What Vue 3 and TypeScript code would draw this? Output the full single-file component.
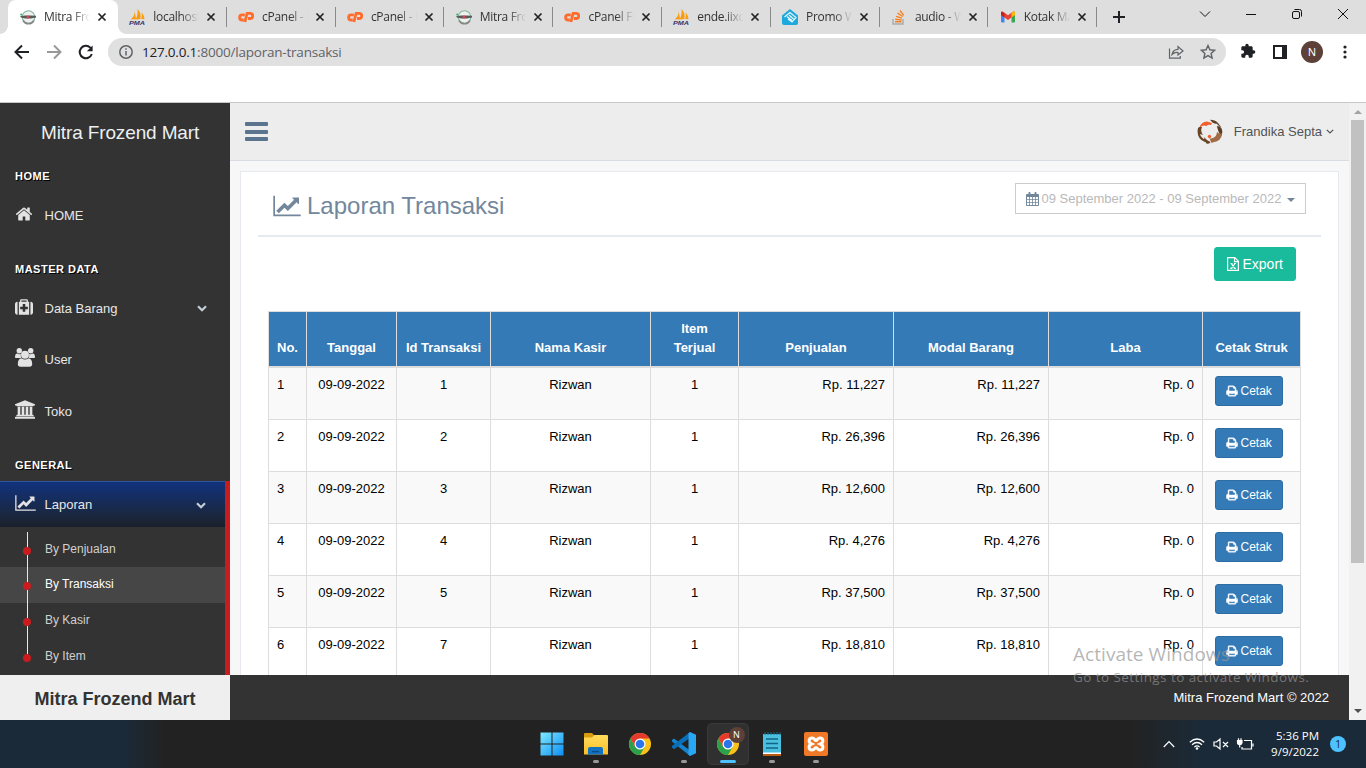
<script setup lang="ts">
interface Tab { title: string; icon: string }
interface Row { no: number; tanggal: string; id: number; kasir: string; item: number; penjualan: string; modal: string; laba: string }

const tabs: Tab[] = [
  { title: 'Mitra Frozend', icon: 'mitra' },
  { title: 'localhost / 127', icon: 'pma' },
  { title: 'cPanel - Main', icon: 'cpanel' },
  { title: 'cPanel - Main', icon: 'cpanel' },
  { title: 'Mitra Frozend', icon: 'mitra' },
  { title: 'cPanel File', icon: 'cpanel' },
  { title: 'ende.iixcp', icon: 'pma' },
  { title: 'Promo Web', icon: 'promo' },
  { title: 'audio - Web', icon: 'stack' },
  { title: 'Kotak Masuk', icon: 'gmail' },
]

const columns: string[] = ['No.', 'Tanggal', 'Id Transaksi', 'Nama Kasir', 'Item Terjual', 'Penjualan', 'Modal Barang', 'Laba', 'Cetak Struk']

const makeRow = (no: number, id: number, total: string): Row => ({
  no, tanggal: '09-09-2022', id, kasir: 'Rizwan', item: 1, penjualan: `Rp. ${total}`, modal: `Rp. ${total}`, laba: 'Rp. 0',
})
const rows: Row[] = [
  makeRow(1, 1, '11,227'),
  makeRow(2, 2, '26,396'),
  makeRow(3, 3, '12,600'),
  makeRow(4, 4, '4,276'),
  makeRow(5, 5, '37,500'),
  makeRow(6, 7, '18,810'),
]

const submenu: string[] = ['By Penjualan', 'By Transaksi', 'By Kasir', 'By Item']
const apps: { icon: string; state: string }[] = [
  { icon: 'windows', state: '' },
  { icon: 'folder', state: 'open' },
  { icon: 'chrome', state: '' },
  { icon: 'vscode', state: 'open' },
  { icon: 'chrome', state: 'active' },
  { icon: 'notepad', state: 'open' },
  { icon: 'xampp', state: 'open' },
]
</script>

<template>
  <div class="screen">
    <svg class="defs" aria-hidden="true">
      <symbol id="i-mitra" viewBox="0 0 16 16">
        <circle cx="8.5" cy="8" r="6.3" fill="#eef1ef" stroke="#7fb89c" stroke-width="1.1" />
        <path d="M3 11.5a6.3 6.3 0 0 0 11 0" fill="none" stroke="#888" stroke-width="1.6" />
        <path d="M0 7.2l5-.8h6l5 .4v1.8l-5 .8H5L1 8.6z" fill="#5a5a5c" />
        <circle cx="8" cy="8" r="1.5" fill="#d0494b" /><circle cx="1.3" cy="5.6" r="1.1" fill="#3bb273" />
      </symbol>
      <symbol id="i-pma" viewBox="0 0 16 16">
        <path d="M5.6 1.5C6 5 5 8 1.5 10.5L7 10zM8.5 0c3 3 3.5 6.5 3 10L6.5 10.4C8.5 7 9 4 8.500 0zM12.500 3.500c2 2 2.800 4.500 3 6.500l-3.200.2c.6-2 .7-4 .2-6.700z" fill="#f89c0e" />
        <text x="0" y="15.800" font-family="Liberation Sans" font-size="6.200" font-weight="bold" font-style="italic" textLength="16" lengthAdjust="spacingAndGlyphs" fill="#33336b">PMA</text>
      </symbol>
      <symbol id="i-cpanel" viewBox="0 0 16 16">
        <path d="M6.800 5.800H4.200a2.600 2.600 0 0 0 0 5.200h1.500M6.900 13l2.200-8.700h3a2.600 2.600 0 0 1 0 5.200H10" fill="none" stroke="#ff6c2c" stroke-width="2.800" />
      </symbol>
      <symbol id="i-promo" viewBox="0 0 16 16">
        <path d="M8 0l8 6.500V14q0 2-2 2H2q-2 0-2-2V6.500z" fill="#1da9dc" />
        <path d="M2.500 8L8 3.500l6 5-4 4.500-4-3M5 7.500l5 4M7 6l4.500 4" fill="none" stroke="#e8f8ff" stroke-width="1.200" />
      </symbol>
      <symbol id="i-stack" viewBox="0 0 16 16">
        <path d="M2 10v5h10v-5" fill="none" stroke="#a9aaac" stroke-width="1.400" />
        <path d="M4 12.800h6.500M4.200 10.300l6.300.7M5 7.300l6 1.800M6.500 4.200l5.300 3.300M9 1.500l3.800 4.900" stroke="#f48024" stroke-width="1.400" />
      </symbol>
      <symbol id="i-gmail" viewBox="0 0 16 16">
        <path d="M1 4v8.500q0 1 1 1h2.500V7z" fill="#4285f4" /><path d="M15 4v8.500q0 1-1 1h-2.500V7z" fill="#34a853" />
        <path d="M1 6V4q0-2 2.200-1.300L8 6.300l4.800-3.600Q15 2 15 4v2l-7 5z" fill="#ea4335" />
        <path d="M11.500 3.700l1.300-1Q15 2 15 4v2l-3.500 2.600z" fill="#fbbc04" /><path d="M1 6V4q0-1 .8-1.400L4.500 4.600v4z" fill="#c5221f" />
      </symbol>
      <symbol id="i-home" viewBox="0 0 1792 1792"><path d="M1472 992v480q0 26-19 45t-45 19h-384v-384h-256v384h-384q-26 0-45-19t-19-45v-480q0-1 .5-3t.5-3l575-474 575 474q1 2 1 6zm223-69l-62 74q-8 9-21 11h-3q-13 0-21-7l-692-577-692 577q-12 8-24 7-13-2-21-11l-62-74q-8-10-7-23.500t11-21.500l719-599q32-26 76-26t76 26l244 204v-195q0-14 9-23t23-9h192q14 0 23 9t9 23v408l219 182q10 8 11 21.500t-7 23.500z" /></symbol>
      <symbol id="i-medkit" viewBox="0 0 1792 1792"><path d="M1280 1088v-192q0-14-9-23t-23-9h-224v-224q0-14-9-23t-23-9h-192q-14 0-23 9t-9 23v224h-224q-14 0-23 9t-9 23v192q0 14 9 23t23 9h224v224q0 14 9 23t23 9h192q14 0 23-9t9-23v-224h224q14 0 23-9t9-23zm-640-704h512v-128h-512v128zm-384 0v1280h-32q-92 0-158-66t-66-158v-832q0-92 66-158t158-66h32zm1152 0v1280h-1024v-1280h128v-160q0-40 28-68t68-28h576q40 0 68 28t28 68v160h128zm384 224v832q0 92-66 158t-158 66h-32v-1280h32q92 0 158 66t66 158z" /></symbol>
      <symbol id="i-users" viewBox="0 0 20 19">
        <circle cx="4.300" cy="2.800" r="2.700" /><circle cx="15.700" cy="2.800" r="2.700" />
        <path d="M0 9.500q0-4 2.200-4 2 1.300 3.800.4-.7 2.200.3 4.100H2Q0 10 0 9.500zM20 9.500q0-4-2.200-4-2 1.300-3.800.4.700 2.200-.3 4.100H18q2 0 2-.5z" />
        <circle cx="10" cy="6.700" r="4" />
        <path d="M6.500 10.300Q10 12.800 13.500 10.300q3.700.7 3.700 5.700 0 2.800-2.700 2.800h-9q-2.700 0-2.700-2.800 0-5 3.700-5.700z" />
      </symbol>
      <symbol id="i-bank" viewBox="0 0 1920 1792"><path d="M960 0l960 384v128h-128q0 26-20.500 45t-48.500 19h-1526q-28 0-48.500-19t-20.500-45h-128v-128zm-704 640h256v768h128v-768h256v768h128v-768h256v768h128v-768h256v768h59q28 0 48.500 19t20.500 45v64h-1664v-64q0-26 20.500-45t48.500-19h59v-768zm1595 960q28 0 48.500 19t20.500 45v128h-1920v-128q0-26 20.500-45t48.500-19h1782z" /></symbol>
      <symbol id="i-chart" viewBox="0 0 2048 1792"><path d="M2048 1536v128h-2048v-1536h128v1408h1920zm-128-1248v435q0 21-19.500 29.500t-35.500-7.500l-121-121-633 633q-10 10-23 10t-23-10l-233-233-416 416-192-192 585-585q10-10 23-10t23 10l233 233 464-464-121-121q-16-16-7.500-35.500t29.500-19.500h435q14 0 23 9t9 23z" /></symbol>
      <symbol id="i-print" viewBox="0 0 1792 1792"><path d="M448 1536h896v-256h-896v256zm0-640h896v-384h-160q-40 0-68-28t-28-68v-160h-640v640zm1152 64q0-26-19-45t-45-19-45 19-19 45 19 45 45 19 45-19 19-45zm128 0v416q0 13-9.500 22.500t-22.500 9.500h-224v160q0 40-28 68t-68 28h-960q-40 0-68-28t-28-68v-160h-224q-13 0-22.500-9.500t-9.500-22.500v-416q0-79 56.500-135.500t135.500-56.500h64v-544q0-40 28-68t68-28h672q40 0 88 20t76 48l152 152q28 28 48 76t20 88v256h64q79 0 135.500 56.500t56.500 135.500z" /></symbol>
      <symbol id="i-calendar" viewBox="0 0 13 14">
        <path fill-rule="evenodd" d="M1 2h11q1 0 1 1v10q0 1-1 1H1q-1 0-1-1V3q0-1 1-1zM1 5v2.200h2.200V5zM4 5v2.200h2.200V5zM7 5v2.200h2.200V5zM10 5v2.200h2V5zM1 8v2.200h2.200V8zM4 8v2.200h2.200V8zM7 8v2.200h2.200V8zM10 8v2.200h2V8zM1 11v2h2.200v-2zM4 11v2h2.200v-2zM7 11v2h2.200v-2zM10 11v2h2v-2z" />
        <rect x="2.500" y="0" width="2" height="3.600" rx=".8" /><rect x="8.500" y="0" width="2" height="3.600" rx=".8" />
      </symbol>
      <symbol id="i-excel" viewBox="0 0 12 14">
        <path d="M.6.600h7.200l3.600 3.600v9.200H.6zM7.500.600v4h4M3.500 6.500h2M7 6.500h1.800M3.300 11.300h2M6.800 11.300h2M4.300 6.500l3.500 4.800M8 6.500l-3.600 4.800" fill="none" stroke="currentColor" stroke-width="1.200" />
      </symbol>
      <symbol id="i-chevron" viewBox="0 0 10 7"><path d="M1 1.200L5 5.200 9 1.200" fill="none" stroke="currentColor" stroke-width="2.200" /></symbol>
      <symbol id="i-windows" viewBox="0 0 24 24">
        <linearGradient id="g-win" x1="0" y1="0" x2="1" y2="1"><stop offset="0" stop-color="#7eeaff" /><stop offset="1" stop-color="#0d8ef5" /></linearGradient>
        <path d="M.500.500h11v11H.500zM12.500.500h11v11h-11zM.500 12.500h11v11H.500zM12.500 12.500h11v11h-11z" fill="url(#g-win)" />
      </symbol>
      <symbol id="i-folder" viewBox="0 0 24 24">
        <path d="M0 2q0-1 1-1h7l2.500 2.500H14V10H0z" fill="#d89c0c" />
        <linearGradient id="g-fold" x1="0" y1="0" x2="0" y2="1"><stop offset="0" stop-color="#ffdc5e" /><stop offset="1" stop-color="#f9bf26" /></linearGradient>
        <path d="M0 5.500h8L10.500 3H23q1 0 1 1V22.500H0z" fill="url(#g-fold)" />
        <path d="M4 22.500v-5.500q0-2 2-2h11q2 0 2 2v5.500z" fill="#1272c2" /><path d="M8 19h7v1.300H8z" fill="#0b4a84" />
      </symbol>
      <symbol id="i-chrome" viewBox="0 0 24 24">
        <circle cx="12" cy="12" r="11" fill="#fbc116" />
        <path d="M12 12l4.800 2.800L12 23A11 11 0 0 1 2.470 6.500L7.200 14.700z" fill="#2da04c" />
        <path d="M2.470 6.500A11 11 0 0 1 21.530 6.500H12L7.200 14.700z" fill="#e33b2e" />
        <circle cx="12" cy="12" r="5.500" fill="#fff" /><circle cx="12" cy="12" r="4.300" fill="#2a75ea" />
      </symbol>
      <symbol id="i-vscode" viewBox="0 0 24 24">
        <path d="M0 8l2-1.600L18 18.500V24L0 9.500z" fill="#1484cf" /><path d="M0 15.500l2 1.800L18 6V0L0 14z" fill="#0a6fb8" />
        <path d="M18 0l6 2.700v18.600L18 24l-1.500-1.200V1.200z" fill="#2ba6f2" />
      </symbol>
      <symbol id="i-notepad" viewBox="0 0 24 24">
        <path d="M3 21h18v3H3z" fill="#b85a14" /><path d="M3 20h18v2H3z" fill="#fff" />
        <path d="M3 2h18v18.500H3z" fill="#4bbfde" /><path d="M6 7h12M6 11.500h12M6 16h12" stroke="#0f6585" stroke-width="1.500" />
        <path d="M5 0v3M8 0v3M11 0v3M14 0v3M17 0v3M20 0v3" stroke="#166c8c" />
      </symbol>
      <symbol id="i-xampp" viewBox="0 0 24 24">
        <rect width="24" height="24" rx="2" fill="#f07826" />
        <path d="M7.500 12C4 10.500 4.500 6 8 6c3 0 2.500 2.500 4 2.500S13 6 16 6c3.500 0 4 4.500.5 6 3.500 1.500 3 6-.5 6-3 0-2.500-2.500-4-2.500S11 18 8 18c-3.500 0-4-4.500-.5-6z" fill="none" stroke="#fff" stroke-width="3" />
      </symbol>
    </svg>

    <header class="strip">
      <div v-for="(tab, i) in tabs" :key="i" class="tab" :class="{ current: i === 0 }">
        <svg class="favicon"><use :href="'#i-' + tab.icon" /></svg>
        <span class="tab-title">{{ tab.title }}</span>
        <svg class="tab-close" viewBox="0 0 8 8"><path d="M.5.5l7 7M7.500.5l-7 7" /></svg>
      </div>
      <svg class="plus" viewBox="0 0 12 12"><path d="M6 0v12M0 6h12" /></svg>
      <div class="win-controls">
        <svg viewBox="0 0 12 12"><path d="M1 3.500l5 5 5-5" /></svg>
        <svg viewBox="0 0 12 12"><path d="M1 6.500h10" /></svg>
        <svg viewBox="0 0 12 12"><rect x="1.500" y="3.500" width="7" height="7" rx="1.500" /><path d="M3.500 1.500h5q2 0 2 2v5" /></svg>
        <svg viewBox="0 0 12 12"><path d="M1 1l10 10M11 1L1 11" /></svg>
      </div>
    </header>

    <div class="toolbar">
      <svg class="nav" viewBox="0 0 16 16"><path d="M15 8H2M8 1.500L1.500 8 8 14.500" /></svg>
      <svg class="nav dim" viewBox="0 0 16 16"><path d="M1 8h13M8 1.500L14.500 8 8 14.500" /></svg>
      <svg class="nav" viewBox="0 0 16 16"><path d="M13.800 10A6.200 6.200 0 1 1 12.300 3.600L13 4.300" /><path d="M14.600 1.500v5.700H8.900z" class="solid" /></svg>
      <div class="omnibox">
        <svg class="info" viewBox="0 0 14 14"><circle cx="7" cy="7" r="6.200" /><path d="M7 6v4.500M7 3.300v1.500" /></svg>
        <span class="url"><b>127.0.0.1</b>:8000/laporan-transaksi</span>
        <svg class="share" viewBox="0 0 16 16"><path d="M1.500 4.500v9.700h10.800V12M4 10.500Q5 5.500 10 5.300V2.500L15 7l-5 4V8.500Q6.500 8 4 10.500z" /></svg>
        <svg class="star" viewBox="0 0 16 16"><path d="M8 1.500l1.900 4.300 4.700.5-3.500 3.100 1 4.600L8 11.600 3.900 14l1-4.600L1.400 6.300l4.700-.5z" /></svg>
      </div>
      <svg class="ext" viewBox="0 0 24 24"><path d="M20.500 11H19V7c0-1.100-.9-2-2-2h-4V3.500a2.500 2.500 0 0 0-5 0V5H4c-1.100 0-2 .9-2 2v3.800h1.500a2.700 2.700 0 0 1 0 5.400H2V20c0 1.100.9 2 2 2h3.800v-1.500a2.700 2.700 0 0 1 5.400 0V22H17c1.100 0 2-.9 2-2v-4h1.500a2.500 2.500 0 0 0 0-5z" /></svg>
      <svg class="panel-icon" viewBox="0 0 14 14"><path fill-rule="evenodd" d="M0 0h14v14H0zM2 2v10h7V2z" /></svg>
      <span class="profile">N</span>
      <svg class="dots" viewBox="0 0 4 14"><circle cx="2" cy="2" r="1.600" /><circle cx="2" cy="7" r="1.600" /><circle cx="2" cy="12" r="1.600" /></svg>
    </div>

    <div class="page">
      <aside class="sidebar">
        <div class="brand">Mitra Frozend Mart</div>
        <h3 class="h-home">HOME</h3>
        <div class="item home"><svg class="ic-home"><use href="#i-home" /></svg><span>HOME</span></div>
        <h3 class="h-master">MASTER DATA</h3>
        <div class="item barang"><svg class="ic-medkit"><use href="#i-medkit" /></svg><span>Data Barang</span><svg class="chev"><use href="#i-chevron" /></svg></div>
        <div class="item user"><svg class="ic-users"><use href="#i-users" /></svg><span>User</span></div>
        <div class="item toko"><svg class="ic-bank"><use href="#i-bank" /></svg><span>Toko</span></div>
        <h3 class="h-general">GENERAL</h3>
        <div class="group">
          <div class="item laporan"><svg class="ic-chart"><use href="#i-chart" /></svg><span>Laporan</span><svg class="chev"><use href="#i-chevron" /></svg></div>
          <ul class="submenu">
            <li v-for="(label, i) in submenu" :key="label" :class="{ on: i === 1 }"><i class="dot"></i>{{ label }}</li>
          </ul>
        </div>
        <div class="side-foot">Mitra Frozend Mart</div>
      </aside>

      <main class="content">
        <div class="topnav">
          <div class="bars"><i></i><i></i><i></i></div>
          <div class="who">
            <svg class="avatar" viewBox="0 0 26 26">
              <path d="M2.500 8.500Q4 3 10 2.500l5 1.500-1 2q-3-1-4.500 1-3-1.500-7 1.500z" fill="#f0602c" />
              <path d="M13 .8q5 0 8 3.200l3.500 4.500q-3-1.500-5-4-2 .5-4-1zM24.300 9q2 4 0 8-1.500-1-3-5l-1.500-5q3 0 4.500 2z" fill="#5c3c22" />
              <path d="M25 14q0 8.500-10 9.500 1-3 4-5.500l1-5q3 2.500 5 1z" fill="#a06a44" />
              <path d="M12.500 19.500q4.500.5 7.500-4l1.500 4-7 4.500z" fill="#a06a44" />
              <path d="M1 9q2-2 4-1-2 4 1 8l-3-1q1 4 6 6l2 2.500Q3 22.500 1 16q-1-4 0-7zM7 18q3 4 6.500 5-1 2.500-4 1.500Q7 22 7 18z" fill="#6a4524" />
              <circle cx="12.500" cy="17.500" r="1.700" fill="#f0602c" />
            </svg>
            <span>Frandika Septa</span>
            <svg class="angle" viewBox="0 0 8 5"><path d="M.8.8L4 4 7.200.8" /></svg>
          </div>
        </div>
        <section class="card">
          <div class="card-head">
            <h2><svg><use href="#i-chart" /></svg><span>Laporan Transaksi</span></h2>
            <div class="range"><svg><use href="#i-calendar" /></svg><span>09 September 2022 - 09 September 2022</span><i class="caret"></i></div>
          </div>
          <div class="actions"><button class="export"><svg><use href="#i-excel" /></svg><span>Export</span></button></div>
          <table>
            <colgroup><col v-for="(c, i) in columns" :key="c" :class="'c' + i" /></colgroup>
            <thead><tr><th v-for="c in columns" :key="c">{{ c }}</th></tr></thead>
            <tbody>
              <tr v-for="r in rows" :key="r.no">
                <td>{{ r.no }}</td>
                <td class="mid">{{ r.tanggal }}</td>
                <td class="mid">{{ r.id }}</td>
                <td class="mid">{{ r.kasir }}</td>
                <td class="mid">{{ r.item }}</td>
                <td class="num">{{ r.penjualan }}</td>
                <td class="num">{{ r.modal }}</td>
                <td class="num">{{ r.laba }}</td>
                <td class="act"><button class="print"><svg><use href="#i-print" /></svg><span>Cetak</span></button></td>
              </tr>
            </tbody>
          </table>
        </section>
        <footer class="foot">Mitra Frozend Mart © 2022</footer>
      </main>
      <div class="scrollbar"><i class="up"></i><i class="thumb"></i><i class="down"></i></div>
    </div>

    <div class="taskbar">
      <div class="apps">
        <div v-for="(a, i) in apps" :key="i" class="app" :class="a.state">
          <svg><use :href="'#i-' + a.icon" /></svg>
          <span v-if="a.state === 'active'" class="n-badge">N</span>
        </div>
      </div>
      <div class="tray">
        <svg class="t-up" viewBox="0 0 12 8"><path d="M.8 7L6 1.500 11.200 7" /></svg>
        <svg class="t-wifi" viewBox="0 0 16 12"><path d="M.8 4.300q7.200-6.600 14.400 0M3 6.800q5-4.600 10 0M5.300 9.100q2.700-2.300 5.400 0" /><circle cx="8" cy="10.500" r="1.300" /></svg>
        <svg class="t-vol" viewBox="0 0 16 12"><path d="M1 4h2.500L7 1v10L3.500 8H1zM10 4l5 5M15 4l-5 5" /></svg>
        <svg class="t-bat" viewBox="0 0 17 13"><path d="M7 2.500h7.500v8.500H5V9M16 5.500v3" /><path d="M.5 2.500h4.500v2Q5 6.500 2.700 6.500T.5 4.500zM1.500.3v3M4 .3v3M2.700 6v3.500" class="plug" /></svg>
        <div class="clock"><span>5:36 PM</span><span>9/9/2022</span></div>
        <span class="note">1</span>
      </div>
    </div>

    <div class="watermark"><div class="w1">Activate Windows</div><div class="w2">Go to Settings to activate Windows.</div></div>
  </div>
</template>

<style>
body { margin: 0; overflow: hidden; }
</style>

<style scoped>
* { box-sizing: border-box; }
svg { flex: none; display: block; overflow: visible; }
button { font: inherit; color: #fff; display: flex; align-items: center; padding: 0; }
.screen { position: relative; width: 1366px; height: 768px; overflow: hidden; background: #fff; font-family: "Liberation Sans", Arial, sans-serif; font-size: 13px; display: flex; flex-direction: column; }
.defs { position: absolute; width: 0; height: 0; }

.strip { height: 34px; background: #dedede; display: flex; padding-left: 8px; font-family: "Open Sans", "Noto Sans", sans-serif; }
.tab { width: 108.800px; flex: none; height: 34px; display: flex; align-items: center; padding-left: 12px; position: relative; }
.tab.current { background: #fff; width: 110px; border-radius: 8px 8px 0 0; }
.tab.current::before, .tab.current::after { content: ""; position: absolute; bottom: 0; width: 8px; height: 8px; }
.tab.current::before { left: -8px; background: radial-gradient(circle at 0 0, transparent 7.500px, #fff 8px); }
.tab.current::after { right: -8px; background: radial-gradient(circle at 100% 0, transparent 7.500px, #fff 8px); }
.tab:not(.current) { border-right: 1px solid #8a8a8a; height: 20px; margin-top: 7px; padding-left: 11.300px; }
.favicon { width: 16px; height: 16px; }
.tab-title { margin-left: 8px; width: 46px; font-size: 12px; letter-spacing: -0.300px; line-height: 16px; white-space: nowrap; overflow: hidden; color: #333; -webkit-mask-image: linear-gradient(90deg, #000 60%, transparent 100%); mask-image: linear-gradient(90deg, #000 60%, transparent 100%); }
.tab-close { width: 8px; height: 8px; margin-left: 8px; }
.tab-close path { stroke: #222; stroke-width: 1.700; }
.plus { width: 12px; height: 12px; margin: 11px 0 0 16px; }
.plus path { stroke: #202124; stroke-width: 2; }
.win-controls { margin-left: auto; display: flex; gap: 34px; padding: 8px 17px 0 0; }
.win-controls svg { width: 12px; height: 12px; }
.win-controls path, .win-controls rect { fill: none; stroke: #111; stroke-width: 1; }

.toolbar { height: 69px; border-bottom: 1px solid #c8c8c8; display: flex; align-items: flex-start; padding-left: 14px; }
.nav { width: 16px; height: 16px; margin: 10px 16px 0 0; }
.nav path { fill: none; stroke: #202124; stroke-width: 2; }
.nav path.solid { fill: #202124; stroke: none; }
.nav.dim path { stroke: #999; }
.omnibox { margin: 4px 0 0 -2px; width: 1118px; height: 28px; border-radius: 14px; background: #e0e0e0; display: flex; align-items: center; padding: 0 10px 0 11px; flex: none; }
.info { width: 14px; height: 14px; }
.info circle, .info path { fill: none; stroke: #5f6368; stroke-width: 1.500; }
.url { margin-left: 9px; font-family: "Open Sans", "Noto Sans", sans-serif; font-size: 13.500px; letter-spacing: -0.210px; color: #5f6368; }
.url b { font-weight: 400; color: #202124; }
.share { width: 16px; height: 16px; margin-left: auto; }
.share path { fill: none; stroke: #5f6368; stroke-width: 1.200; }
.star { width: 16px; height: 16px; margin-left: 16px; }
.star path { fill: none; stroke: #5f6368; stroke-width: 1.400; }
.ext { width: 16px; height: 16px; margin: 9px 0 0 14px; fill: #202124; }
.panel-icon { width: 14px; height: 14px; margin: 11px 0 0 17px; fill: #202124; }
.profile { width: 22px; height: 22px; margin: 7px 0 0 14px; border-radius: 50%; background: #5d4037; color: #fff; font-size: 11px; line-height: 22px; text-align: center; }
.dots { width: 4px; height: 14px; margin: 11px 0 0 19.500px; fill: #202124; }

.page { height: 617px; display: flex; flex: none; }
.sidebar { width: 230px; background: #333; color: #e7e7e7; display: flex; flex-direction: column; flex: none; }
.brand { height: 59px; line-height: 59px; padding-left: 41px; font-size: 19px; letter-spacing: -0.130px; white-space: nowrap; color: #ecf0f1; }
.sidebar h3 { margin: 0 0 0 15px; font-size: 11px; line-height: 14px; letter-spacing: 0.500px; color: #fff; text-shadow: 1px 1px #000; }
.sidebar .h-home { padding-top: 7px; }
.item { display: flex; align-items: center; padding-left: 15px; height: 46px; flex: none; }
.item svg { width: 18px; height: 18px; fill: #e3e3e3; margin-left: -0.500px; }
.item span { margin-left: 12px; }
.item svg.ic-home, .item svg.ic-medkit { margin-top: -3px; }
.item svg.ic-users { width: 20px; height: 19px; margin-top: -3px; }
.item svg.ic-bank { width: 20px; height: 19px; margin-top: -3px; }
.item svg.ic-chart { width: 21px; height: 18px; margin-top: -4px; }
.ic-users + span, .ic-bank + span { margin-left: 10px; }
.ic-chart + span { margin-left: 9px; }
.item svg.chev { width: 10px; height: 7px; margin-left: auto; margin-right: 23px; margin-top: 1px; color: #c4cfda; }
.home { margin-top: 8px; height: 49px; }
.sidebar .h-master { margin-top: 22px; }
.barang { margin-top: 9px; }
.user { margin-top: 5px; }
.toko { margin-top: 6px; }
.sidebar .h-general { margin-top: 24px; }
.group { margin-top: 9px; border-right: 5px solid #c91c1f; height: 194px; }
.laporan { background: linear-gradient(#11327d, #1b2536 85%, #1a1f2a); border-top: 1px solid #33549a; height: 46px; }
.item.laporan svg.chev { margin-right: 19px; }
.submenu { list-style: none; margin: 0; padding: 4px 0 0; position: relative; font-size: 12px; color: #d0d0d0; }
.submenu::before { content: ""; position: absolute; z-index: 1; left: 27px; top: 5px; height: 126px; width: 1px; background: #e8e8e8; }
.submenu li { height: 36px; line-height: 34px; padding-left: 45px; position: relative; }
.submenu li:first-child { line-height: 36px; }
.submenu li.on { background: #464646; color: #fff; }
.dot { position: absolute; z-index: 2; left: 23px; top: 15px; width: 8px; height: 8px; border-radius: 50%; background: #c91c1f; }
.submenu li:first-child .dot { top: 16px; }
.side-foot { margin-top: auto; height: 45px; background: #efefef; color: #333; font-size: 18px; font-weight: 700; text-align: center; line-height: 48px; }

.content { flex: 1; display: flex; flex-direction: column; background: #f7f7f7; min-width: 0; overflow: hidden; }
.topnav { height: 58px; flex: none; background: #ededed; border-bottom: 1px solid #d9dee4; display: flex; justify-content: space-between; padding: 0 15px; align-items: center; }
.bars { width: 23px; display: grid; gap: 3.500px; }
.bars i { height: 4px; background: #5a738e; border-radius: 1px; }
.who { display: flex; align-items: center; color: #515356; }
.avatar { width: 26px; height: 26px; margin-right: 11px; }
.angle { width: 8px; height: 5px; margin-left: 4px; }
.angle path { fill: none; stroke: #515356; stroke-width: 1.200; }
.card { margin: 10px 10px 0; height: 504px; flex: none; overflow: hidden; background: #fff; border: 1px solid #e6e9ed; border-bottom: 0; padding: 0 17px; }
.card-head { height: 65px; border-bottom: 2px solid #e6e9ed; display: flex; justify-content: space-between; padding: 11px 15px 0; }
.card-head h2 { margin: 7px 0 0; font-size: 24px; font-weight: 400; line-height: 32px; color: #73879c; display: flex; }
.card-head h2 svg { width: 28px; height: 24px; fill: #73879c; margin: 4px 6px 0 0; }
.range { width: 291px; height: 31px; border: 1px solid #ccc; display: flex; align-items: center; padding-left: 10px; color: #b9b9b9; white-space: nowrap; }
.range svg { width: 13px; height: 14px; fill: #73879c; margin: 0 2.500px 0 0; }
.caret { border: 4px solid transparent; border-top-color: #73879c; border-bottom: 0; margin: 3px 0 0 5.500px; }
.actions { display: flex; justify-content: flex-end; padding: 10px 25px 30px; }
.export { width: 82px; height: 34px; border: 1px solid #1abb9c; border-radius: 3px; background: #1abb9c; font-size: 14px; padding-left: 12px; }
.export svg { width: 12px; height: 14px; margin-right: 3.500px; }
table { table-layout: fixed; width: 1033px; margin-left: 10px; border-collapse: separate; border-spacing: 0; border-left: 1px solid #ddd; border-top: 1px solid #ddd; color: #000; }
.c0 { width: 38px; } .c1 { width: 90px; } .c2 { width: 94px; } .c3 { width: 160px; } .c4 { width: 88px; }
.c5 { width: 155px; } .c6 { width: 155px; } .c7 { width: 154px; } .c8 { width: 98px; }
th { height: 56px; background: #337ab7; color: #fff; border-right: 1px solid #ddd; border-bottom: 2px solid #ddd; vertical-align: bottom; line-height: 19px; padding: 0 8px 9px; font-weight: 700; }
th:nth-child(5) { padding-left: 20px; padding-right: 20px; }
td { height: 52px; border-right: 1px solid #ddd; border-bottom: 1px solid #ddd; vertical-align: top; line-height: 18px; padding: 8px 8px 0; }
tbody tr:nth-child(odd) { background: #f9f9f9; }
.mid { text-align: center; }
.num { text-align: right; }
.act { padding-left: 12px; }
.print { width: 68px; height: 30px; border: 1px solid #2e6da4; border-radius: 3px; background: #337ab7; font-size: 12px; padding-left: 10px; }
.print svg { width: 12px; height: 12px; fill: #fff; stroke: #fff; stroke-width: 70; margin: -1px 2.500px 0 0; }
.foot { height: 45px; flex: none; margin-top: auto; background: #333; color: #fff; text-align: right; padding-right: 20px; line-height: 45px; }
.scrollbar { width: 17px; background: #f1f1f1; display: flex; flex-direction: column; align-items: center; padding: 7px 0 7px; }
.up { border: 4px solid transparent; border-bottom-color: #a3a3a3; border-top: 0; }
.thumb { width: 13px; height: 443px; background: #c1c1c1; margin-top: 6px; }
.down { border: 4px solid transparent; border-top-color: #505050; border-bottom: 0; margin-top: auto; }

.taskbar { height: 48px; flex: none; background: linear-gradient(90deg, #1b2a38 0, #1b2a38 125px, #222 165px, #222 1130px, #1b2a38 1200px); display: flex; align-items: center; padding-left: 530px; font-family: "Open Sans", "Noto Sans", sans-serif; }
.apps { display: flex; margin-left: -0.500px; }
.app { width: 40px; height: 40px; margin: 0 2px; display: flex; align-items: center; justify-content: center; position: relative; border-radius: 4px; }
.app svg { width: 24px; height: 24px; }
.app.active { background: #303030; box-shadow: 0 0 0 1px #3a3a3a; }
.app.open::after, .app.active::after { content: ""; position: absolute; bottom: 1px; left: 17px; width: 6px; height: 3px; border-radius: 2px; background: #9a9a9a; }
.app.active::after { width: 16px; left: 12px; background: #4cc2ff; }
.n-badge { position: absolute; left: 21px; top: 3px; width: 16px; height: 16px; border-radius: 50%; background: #5d4037; color: #fff; font-size: 9px; line-height: 16px; text-align: center; }
.tray { margin-left: auto; display: flex; align-items: center; padding-right: 20px; color: #fff; }
.tray path { fill: none; stroke: #fff; stroke-width: 1.200; }
.tray circle, .tray path.plug { fill: #fff; }
.t-up { width: 12px; height: 8px; margin-right: 14px; }
.t-wifi { width: 16px; height: 12px; margin-right: 8px; }
.t-vol { width: 16px; height: 12px; margin-right: 8px; }
.t-bat { width: 17px; height: 13px; margin-right: 15px; }
.clock { display: flex; flex-direction: column; align-items: flex-end; font-size: 11.500px; line-height: 16px; width: 50px; white-space: nowrap; }
.note { width: 16px; height: 16px; border-radius: 50%; background: #4cc2ff; color: #123; margin-left: 11px; text-align: center; font-size: 10px; line-height: 16px; }

.watermark { position: absolute; left: 1073px; top: 643px; font-family: "Open Sans", "Noto Sans", sans-serif; color: rgba(150, 150, 150, 0.700); white-space: nowrap; }
.w1 { font-size: 19px; line-height: 22px; letter-spacing: 0.050px; }
.w2 { font-size: 13.500px; line-height: 22px; letter-spacing: 0.430px; margin-top: 1px; }
</style>
